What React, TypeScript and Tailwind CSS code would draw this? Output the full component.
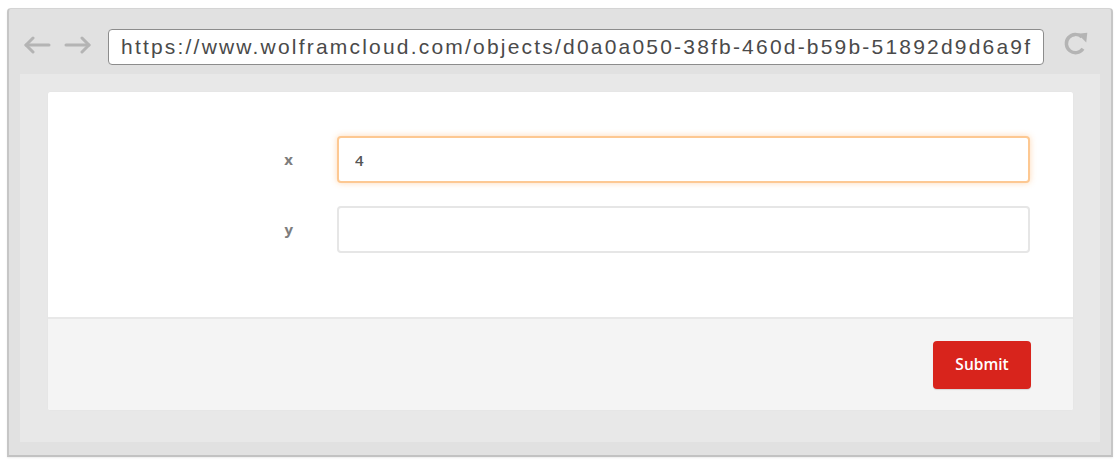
import { useState } from 'react';

const URL_TEXT = 'https://www.wolframcloud.com/objects/d0a0a050-38fb-460d-b59b-51892d9d6a9f';

function ArrowLeft() {
  return (
    <svg width="28" height="18" viewBox="0 0 28 18" fill="none" stroke="#b4b4b4" strokeWidth="3" strokeLinecap="round" strokeLinejoin="round">
      <path d="M26 9H3" />
      <path d="M10 2L3 9l7 7" />
    </svg>
  );
}

function ArrowRight() {
  return (
    <svg width="28" height="18" viewBox="0 0 28 18" fill="none" stroke="#b4b4b4" strokeWidth="3" strokeLinecap="round" strokeLinejoin="round">
      <path d="M2 9h23" />
      <path d="M18 2l7 7-7 7" />
    </svg>
  );
}

function Reload() {
  return (
    <svg width="28" height="28" viewBox="0 0 26 26" fill="none">
      <path d="M19.5 17.5A8.5 8.5 0 1 1 18.5 6.5" stroke="#b4b4b4" strokeWidth="3.2" />
      <path d="M14.5 3.5L23.5 2.5L22.5 11.5Z" fill="#b4b4b4" />
    </svg>
  );
}

export default function App() {
  const [x, setX] = useState('4');
  const [y, setY] = useState('');

  return (
    <div className="h-[466px] w-[1120px] bg-white pl-[7px] pt-[8px]" style={{ fontFamily: '"Open Sans", "Liberation Sans", sans-serif' }}>
      <div className="flex h-[449px] w-[1106px] flex-col rounded-t-[4px] border-x-2 border-b-2 border-t border-x-[#c6c6c6] border-b-[#c2c2c2] border-t-[#d4d4d4] bg-[#e1e1e1] shadow-[0_1px_2px_rgba(0,0,0,0.08)]">
        {/* toolbar */}
        <div className="flex h-[65px] items-start pt-[20px]">
          <div className="flex h-[36px] items-center">
            <div className="mb-[4px] ml-[14px] flex items-center gap-[13px]">
              <ArrowLeft />
              <ArrowRight />
            </div>
            <div
              className="ml-[16px] flex h-[36px] w-[936px] items-center overflow-hidden whitespace-nowrap rounded-[4px] border border-[#8c8c8c] bg-white pl-[12px] text-[21px] tracking-[2.2px] text-[#4a4a4a]"
              style={{ fontFamily: '"Liberation Sans", Arial, sans-serif' }}
            >
              {URL_TEXT}
            </div>
            <div className="mb-[6px] ml-[18px] flex items-center">
              <Reload />
            </div>
          </div>
        </div>

        {/* page area */}
        <div className="mx-[11px] mb-[13px] flex-1 bg-[#e8e8e8] pb-[32px] pl-[28px] pr-[27px] pt-[18px]">
          <div className="flex h-[318px] flex-col overflow-hidden rounded-[2px] bg-white shadow-[0_0_1px_rgba(0,0,0,0.08)]">
            <div className="flex h-[225px] flex-col gap-[23px] pt-[44px]">
              <div className="flex items-center">
                <label htmlFor="field-x" className="w-[250px] pr-[5px] text-right text-[15px] font-bold text-[#7d7d7d]">
                  x
                </label>
                <input
                  id="field-x"
                  value={x}
                  onChange={(e) => setX(e.target.value)}
                  className="ml-[39px] h-[47px] w-[693px] rounded-[4px] border-2 border-[#fdc892] bg-white px-[16px] text-[15px] font-semibold text-[#555] shadow-[0_0_6px_rgba(255,170,90,0.45)] outline-none"
                />
              </div>
              <div className="flex items-center">
                <label htmlFor="field-y" className="w-[250px] pr-[5px] text-right text-[15px] font-bold text-[#7d7d7d]">
                  y
                </label>
                <input
                  id="field-y"
                  value={y}
                  onChange={(e) => setY(e.target.value)}
                  className="ml-[39px] h-[47px] w-[693px] rounded-[4px] border-2 border-[#e6e6e6] bg-white px-[16px] text-[15px] text-[#555] outline-none"
                />
              </div>
            </div>
            <div className="flex flex-1 items-start justify-end border-t-2 border-[#e8e8e8] bg-[#f4f4f4] pr-[42px] pt-[22px]">
              <button
                type="button"
                className="h-[48px] w-[98px] rounded-[4px] bg-[#d8241c] text-[15.5px] font-semibold text-white shadow-[0_1px_1px_rgba(0,0,0,0.12)]"
              >
                Submit
              </button>
            </div>
          </div>
        </div>
      </div>
    </div>
  );
}
